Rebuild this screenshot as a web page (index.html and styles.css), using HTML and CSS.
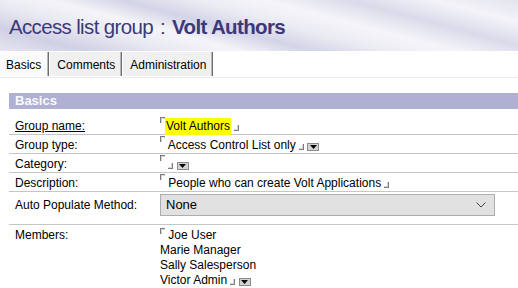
FILE: index.html
```html
<!DOCTYPE html>
<html>
<head>
<meta charset="utf-8">
<link rel="stylesheet" href="styles.css">
</head>
<body>
<div class="header">
  <h1 class="title">Access list group <span class="sep">:</span> <b>Volt Authors</b></h1>
</div>
<div class="tabs">
  <div class="tab active">Basics</div>
  <div class="tab">Comments</div>
  <div class="tab">Administration</div>
</div>
<div class="rule"></div>
<div class="section">
  <div class="section-head">Basics</div>
  <div class="form">
    <div class="row">
      <div class="label"><u>Group name:</u></div>
      <div class="value"><span class="mk-start"></span><span class="hl">Volt Authors</span> <span class="mk-end"></span></div>
    </div>
    <div class="row">
      <div class="label">Group type:</div>
      <div class="value"><span class="mk-start"></span> Access Control List only <span class="mk-end"></span> <span class="ddbtn"><svg width="7" height="4" viewBox="0 0 7 4"><path d="M0 0h7L3.5 4z" fill="#000"/></svg></span></div>
    </div>
    <div class="row">
      <div class="label">Category:</div>
      <div class="value"><span class="mk-start"></span> <span class="mk-end"></span> <span class="ddbtn"><svg width="7" height="4" viewBox="0 0 7 4"><path d="M0 0h7L3.5 4z" fill="#000"/></svg></span></div>
    </div>
    <div class="row">
      <div class="label">Description:</div>
      <div class="value"><span class="mk-start"></span> People who can create Volt Applications <span class="mk-end"></span></div>
    </div>
    <div class="row row-select">
      <div class="label">Auto Populate Method:</div>
      <div class="value">
        <div class="select"><span>None</span><svg class="chev" width="10" height="6" viewBox="0 0 10 6"><path d="M0.5 0.5L5 5L9.5 0.5" fill="none" stroke="#444" stroke-width="1"/></svg></div>
      </div>
    </div>
    <div class="row row-members">
      <div class="label">Members:</div>
      <div class="value members">
        <div><span class="mk-start"></span> Joe User</div>
        <div>Marie Manager</div>
        <div>Sally Salesperson</div>
        <div>Victor Admin <span class="mk-end"></span> <span class="ddbtn"><svg width="7" height="4" viewBox="0 0 7 4"><path d="M0 0h7L3.5 4z" fill="#000"/></svg></span></div>
      </div>
    </div>
  </div>
</div>
</body>
</html>
```
FILE: styles.css
```css
html, body {
  margin: 0;
  padding: 0;
  background: #fff;
}
body {
  font-family: "Liberation Sans", Arial, sans-serif;
  font-size: 12px;
  color: #000;
  width: 518px;
  overflow: hidden;
}
.header {
  height: 51px;
  box-sizing: border-box;
  padding: 16px 0 0 9px;
  background:
    linear-gradient(195deg,
      #e4e4ef 0%, #f3f3f8 12%, #dadbea 24%, #f5f5f9 36%,
      #ebebf3 46%, #d3d4e7 56%, #f4f4f8 66%, #e9e9f2 76%,
      #cfd0e4 88%, #e6e6f0 100%);
}
.title {
  margin: 0;
  font-size: 20.5px;
  line-height: 21px;
  font-weight: normal;
  letter-spacing: -0.65px;
  color: #3b3979;
  white-space: nowrap;
}
.title .sep {
  margin: 0 2px;
}
.title b {
  font-weight: bold;
}
.tabs {
  display: flex;
  height: 24px;
  margin-top: 1px;
}
.tab {
  box-sizing: border-box;
  height: 24px;
  padding: 3px 6px 0 7px;
  line-height: 21px;
  background: #f0f0f0;
  border-right: 1px solid #6d6d6d;
  box-shadow: inset -1px 0 0 #b8b8b8;
}
.tab.active {
  background: #fbfbfb;
  padding: 3px 7px 0 6px;
}
.tab + .tab {
  margin-left: 1px;
}
.rule {
  height: 1px;
  background: #ececec;
  margin-top: 1px;
}
.section {
  margin: 15px 0 0 9px;
}
.section-head {
  height: 16px;
  line-height: 16px;
  background: #b0b0d2;
  color: #fafaff;
  font-weight: bold;
  font-size: 13px;
  padding-left: 6px;
  margin-bottom: 7px;
}
.row {
  display: flex;
  box-sizing: border-box;
  height: 19px;
  padding-top: 1px;
  line-height: 18px;
  border-bottom: 1px solid #c6c6c6;
  white-space: nowrap;
}
.label {
  width: 143px;
  padding-left: 6px;
  flex: none;
}
.value {
  flex: 1;
  padding-left: 2px;
}
.mk-start {
  display: inline-block;
  width: 4px;
  height: 5px;
  border-top: 1px solid #7c7c7c;
  border-left: 1px solid #7c7c7c;
  box-shadow: inset 1px 1px 0 #d6d6d6;
  vertical-align: 7px;
}
.hl {
  background: #ffff00;
  padding: 1px 1px 2px 1px;
}
.mk-end {
  display: inline-block;
  width: 4px;
  height: 5px;
  border-right: 1px solid #7c7c7c;
  border-bottom: 1px solid #7c7c7c;
  box-shadow: inset -1px -1px 0 #d6d6d6;
  vertical-align: -1px;
}
.ddbtn {
  display: inline-flex;
  align-items: center;
  justify-content: center;
  box-sizing: border-box;
  width: 12px;
  height: 8px;
  background: #d4d4d4;
  border: 1px solid #8a8a8a;
  vertical-align: 0;
}
.ddbtn svg {
  display: block;
}
.row-select {
  height: 33px;
  padding-top: 2px;
}
.row-select .label {
  line-height: 22px;
}
.select {
  display: flex;
  align-items: center;
  justify-content: space-between;
  box-sizing: border-box;
  width: 335px;
  height: 22px;
  background: #e1e1e1;
  border: 1px solid #adadad;
  padding: 0 8px 0 5px;
  font-size: 13px;
}
.chev {
  display: block;
}
.row-members {
  height: auto;
  padding-top: 3px;
  line-height: 15px;
  border-bottom: none;
}
.members .mk-start {
  vertical-align: 5px;
}
```
